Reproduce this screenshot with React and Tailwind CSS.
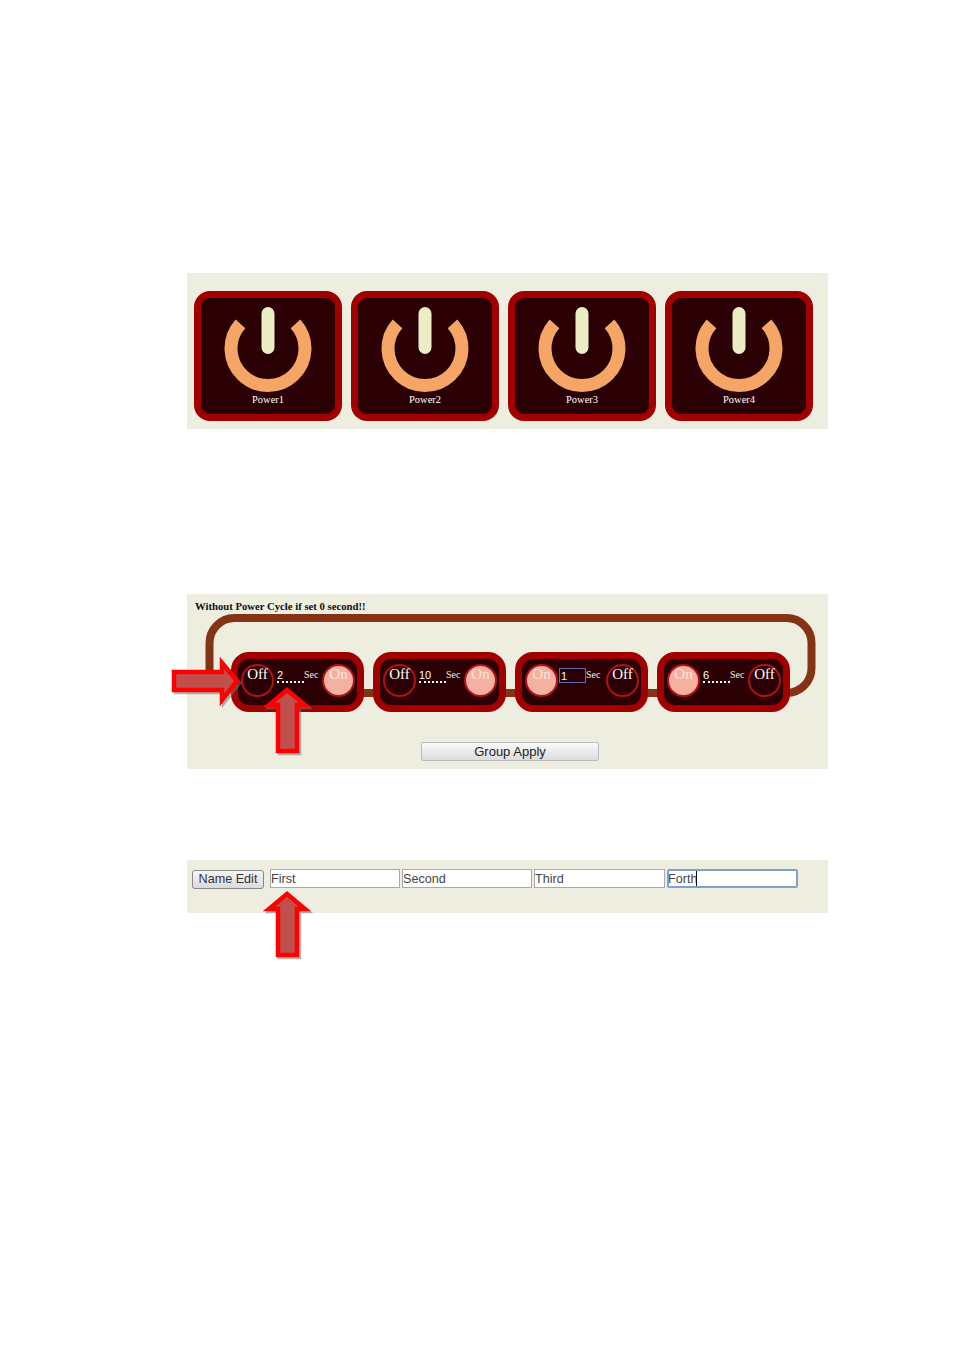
const serif = "font-['Liberation_Serif',serif]";
const sans = "font-['Liberation_Sans',sans-serif]";

function PowerCard({ label }) {
  return (
    <button className="box-border flex h-[130px] w-[148px] shrink-0 flex-col items-center rounded-[16px] border-[7px] border-[#a00000] bg-[#2a0005]">
      <svg width="90" height="90" viewBox="0 0 90 90" className="mt-[7px] shrink-0">
        <path d="M17.5 18.8 A37 37 0 1 0 72.5 18.8" fill="none" stroke="#f5a566" strokeWidth="13" />
        <rect x="38.5" y="2" width="13" height="47" rx="6.5" fill="#ecedc5" />
      </svg>
      <span className={`${serif} -mt-[1px] text-[10.5px] leading-[11px] text-white`}>{label}</span>
    </button>
  );
}

function Circle({ kind }) {
  const on = kind === "On";
  return (
    <button
      className={`${serif} box-border flex h-[33px] w-[33px] shrink-0 justify-center rounded-full border-2 border-[#b01018] ${
        on ? "bg-[#f4b1a0] text-[#fde4da]" : "bg-transparent text-white"
      } text-[15px] leading-[17px]`}
    >
      <span>{kind}</span>
    </button>
  );
}

function TimerCard({ first, last, value, focused }) {
  return (
    <div className="relative z-10 box-border flex h-[60px] w-[133px] shrink-0 items-start rounded-[18px] border-[7px] border-[#a00000] bg-[#2a0005] pl-[3px] pr-[2px] pt-[5px]">
      <Circle kind={first} />
      <input
        readOnly
        value={value}
        className={`${sans} mt-[4px] box-border h-[15px] w-[27px] bg-transparent text-[11px] leading-[13px] text-white outline-none ${
          focused
            ? "ml-[1px] border border-[#5a6ab0] pl-[1px]"
            : "ml-[3px] border-b-2 border-dotted border-white"
        }`}
      />
      <span className={`${serif} mt-[5px] text-[10px] leading-[12px] text-[#f3ecdf]`}>Sec</span>
      <div className="ml-auto">
        <Circle kind={last} />
      </div>
    </div>
  );
}

function NameInput({ value, focused, width = "w-[130px]" }) {
  return (
    <div className="relative shrink-0">
      <input
        readOnly
        value={value}
        className={`${sans} box-border block h-[19px] ${width} bg-white text-[12.6px] leading-[15px] text-[#444] outline-none ${
          focused ? "rounded-[2px] border-2 border-[#7da2ce] indent-[-1px]" : "border border-[#aaa]"
        }`}
      />
      {focused && <span className="absolute left-[29px] top-[2px] h-[15px] w-px bg-[#111]" />}
    </div>
  );
}

function Arrow({ points }) {
  return (
    <g>
      <polygon points={points} fill="#777" opacity="0.55" transform="translate(2 2)" stroke="#777" strokeWidth="4.5" />
      <polygon points={points} fill="#c0504d" stroke="#ff0000" strokeWidth="4.5" strokeLinejoin="miter" />
    </g>
  );
}

export default function App() {
  return (
    <div className="relative h-[1350px] w-[954px] overflow-hidden bg-white pl-[187px] pt-[273px]">
      <section className="box-border flex h-[156px] w-[641px] gap-[9px] bg-[#eeeee0] pl-[7px] pt-[18px]">
        <PowerCard label="Power1" />
        <PowerCard label="Power2" />
        <PowerCard label="Power3" />
        <PowerCard label="Power4" />
      </section>

      <section className="relative mt-[165px] box-border h-[175px] w-[641px] bg-[#eeeee0]">
        <svg width="641" height="110" viewBox="0 0 641 110" className="absolute left-0 top-0">
          <path
            d="M22.5 78 V49 A25 25 0 0 1 47.5 24 H599.5 A25 25 0 0 1 624.5 49 V74 A25 25 0 0 1 599.5 99 H50"
            fill="none"
            stroke="#843314"
            strokeWidth="8"
          />
        </svg>
        <p className={`${serif} relative pl-[8px] pt-[6px] text-[10.7px] font-bold leading-[12px] text-[#111]`}>
          Without Power Cycle if set 0 second!!
        </p>
        <div className="mt-[40px] flex gap-[9px] pl-[44px]">
          <TimerCard first="Off" last="On" value="2" />
          <TimerCard first="Off" last="On" value="10" />
          <TimerCard first="On" last="Off" value="1" focused />
          <TimerCard first="On" last="Off" value="6" />
        </div>
        <div className="mt-[30px] pl-[234px]">
          <button className={`${sans} box-border block h-[19px] w-[178px] rounded-[2px] border border-[#bbb] bg-gradient-to-b from-[#fafafa] to-[#dcdcdc] text-[13px] leading-[15px] text-[#222]`}>
            Group Apply
          </button>
        </div>
      </section>

      <section className="mt-[91px] box-border flex h-[53px] w-[641px] items-start bg-[#eeeee0] pl-[5px] pt-[9px]">
        <button className={`${sans} mt-[1px] box-border h-[19px] w-[72px] shrink-0 rounded-[3px] border border-[#888] bg-gradient-to-b from-[#f6f6f6] to-[#dadada] text-[12.6px] leading-[15px] text-[#333]`}>
          Name Edit
        </button>
        <div className="ml-[6px] flex gap-[2px]">
          <NameInput value="First" />
          <NameInput value="Second" />
          <NameInput value="Third" width="w-[131px]" />
          <NameInput value="Forth" focused width="w-[131px]" />
        </div>
      </section>

      <svg width="954" height="1350" viewBox="0 0 954 1350" className="pointer-events-none absolute left-0 top-0 z-20">
        <Arrow points="174,672 222,672 222,663 237,681 222,700 222,690 174,690" />
        <Arrow points="287,690 305,705 297,705 297,751 278,751 278,705 269,705" />
        <Arrow points="287,894 305,909 297,909 297,955 278,955 278,909 269,909" />
      </svg>
    </div>
  );
}
